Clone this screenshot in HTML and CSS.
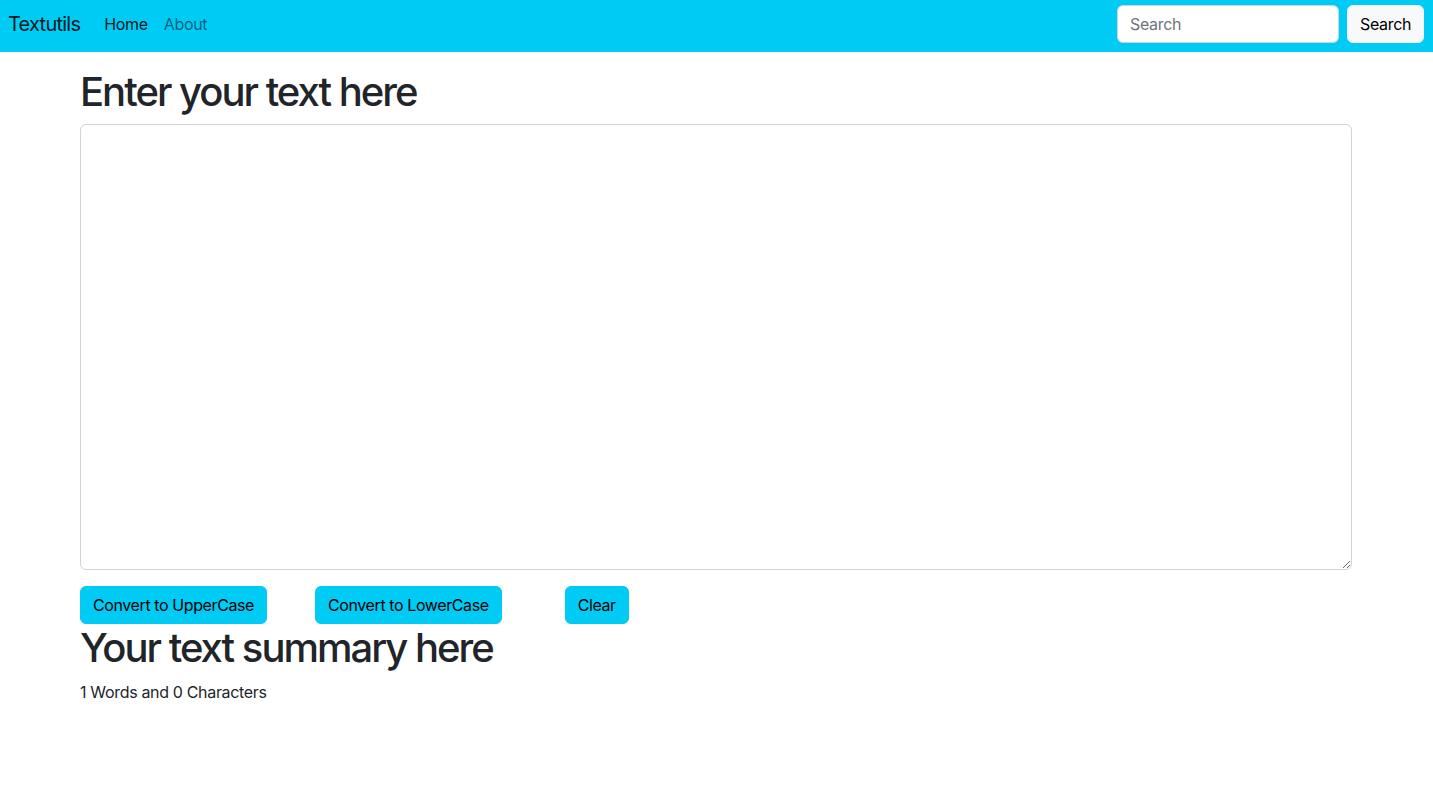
FILE: index.html
```html
<!DOCTYPE html>
<html lang="en">
<head>
<meta charset="utf-8">
<title>Textutils</title>
<link rel="stylesheet" href="styles.css">
</head>
<body>
<nav class="navbar">
  <div class="nav-left">
    <a class="brand" href="#">Textutils</a>
    <ul class="nav-links">
      <li><a class="nav-link active" href="#">Home</a></li>
      <li><a class="nav-link" href="#">About</a></li>
    </ul>
  </div>
  <form class="search-form">
    <input class="search-input" type="search" placeholder="Search">
    <button class="search-btn" type="button">Search</button>
  </form>
</nav>
<main class="container">
  <h1 class="heading">Enter your text here</h1>
  <textarea class="text-box"></textarea>
  <div class="actions">
    <button class="btn btn-upper" type="button">Convert to UpperCase</button>
    <button class="btn btn-lower" type="button">Convert to LowerCase</button>
    <button class="btn btn-clear" type="button">Clear</button>
  </div>
  <h1 class="heading">Your text summary here</h1>
  <p class="summary">1 Words and 0 Characters</p>
</main>
</body>
</html>
```
FILE: styles.css
```css
* { box-sizing: border-box; }
body {
  margin: 0;
  font-family: Inter, "Liberation Sans", sans-serif;
  font-size: 16px;
  line-height: 1.5;
  letter-spacing: -0.33px;
  color: #212529;
  background: #fff;
}
.navbar {
  height: 52px;
  background: #00cbf5;
  display: flex;
  align-items: center;
  justify-content: space-between;
  padding: 0 9px 4px 8px;
}
.nav-left { display: flex; align-items: center; }
.brand {
  font-size: 20px;
  letter-spacing: -0.75px;
  color: rgba(0,0,0,0.9);
  text-decoration: none;
  margin-right: 16px;
  line-height: 30px;
}
.nav-links { list-style: none; margin: 0; padding: 0; display: flex; }
.nav-link {
  display: block;
  padding: 8px;
  color: rgba(0,0,0,0.55);
  text-decoration: none;
}
.nav-link.active { color: rgba(0,0,0,0.9); }
.search-form { display: flex; align-items: center; gap: 8px; margin: 0; }
.search-input {
  width: 222px;
  height: 38px;
  padding: 6px 12px;
  font: inherit;
  font-size: 16px;
  letter-spacing: -0.33px;
  color: #212529;
  background: #fff;
  border: 1px solid #ced4da;
  border-radius: 6px;
}
.search-input::placeholder { color: #6c757d; }
.search-btn {
  height: 38px;
  width: 77px;
  font: inherit;
  font-size: 16px;
  letter-spacing: -0.33px;
  color: #000;
  background: #f8f9fa;
  border: 1px solid #f8f9fa;
  border-radius: 6px;
  padding: 6px 12px;
}
.container {
  width: 1272px;
  margin: 16px 0 16px 80px;
}
.heading {
  font-size: 40px;
  font-weight: 500;
  line-height: 1.2;
  letter-spacing: -2px;
  margin: 0 0 8px;
}
.text-box {
  display: block;
  width: 100%;
  height: 446px;
  padding: 6px 12px;
  font: inherit;
  border: 1px solid #ced4da;
  border-radius: 6px;
  resize: vertical;
  margin-bottom: 16px;
}
.actions { display: flex; align-items: center; }
.btn {
  height: 38px;
  padding: 6px 12px;
  font: inherit;
  font-size: 16px;
  letter-spacing: -0.4px;
  color: #000;
  background: #00cbf5;
  border: 1px solid #00cbf5;
  border-radius: 6px;
}
.btn-lower { margin-left: 48px; }
.btn-clear { margin-left: 63px; }
.summary { margin: 0 0 16px; }
```
